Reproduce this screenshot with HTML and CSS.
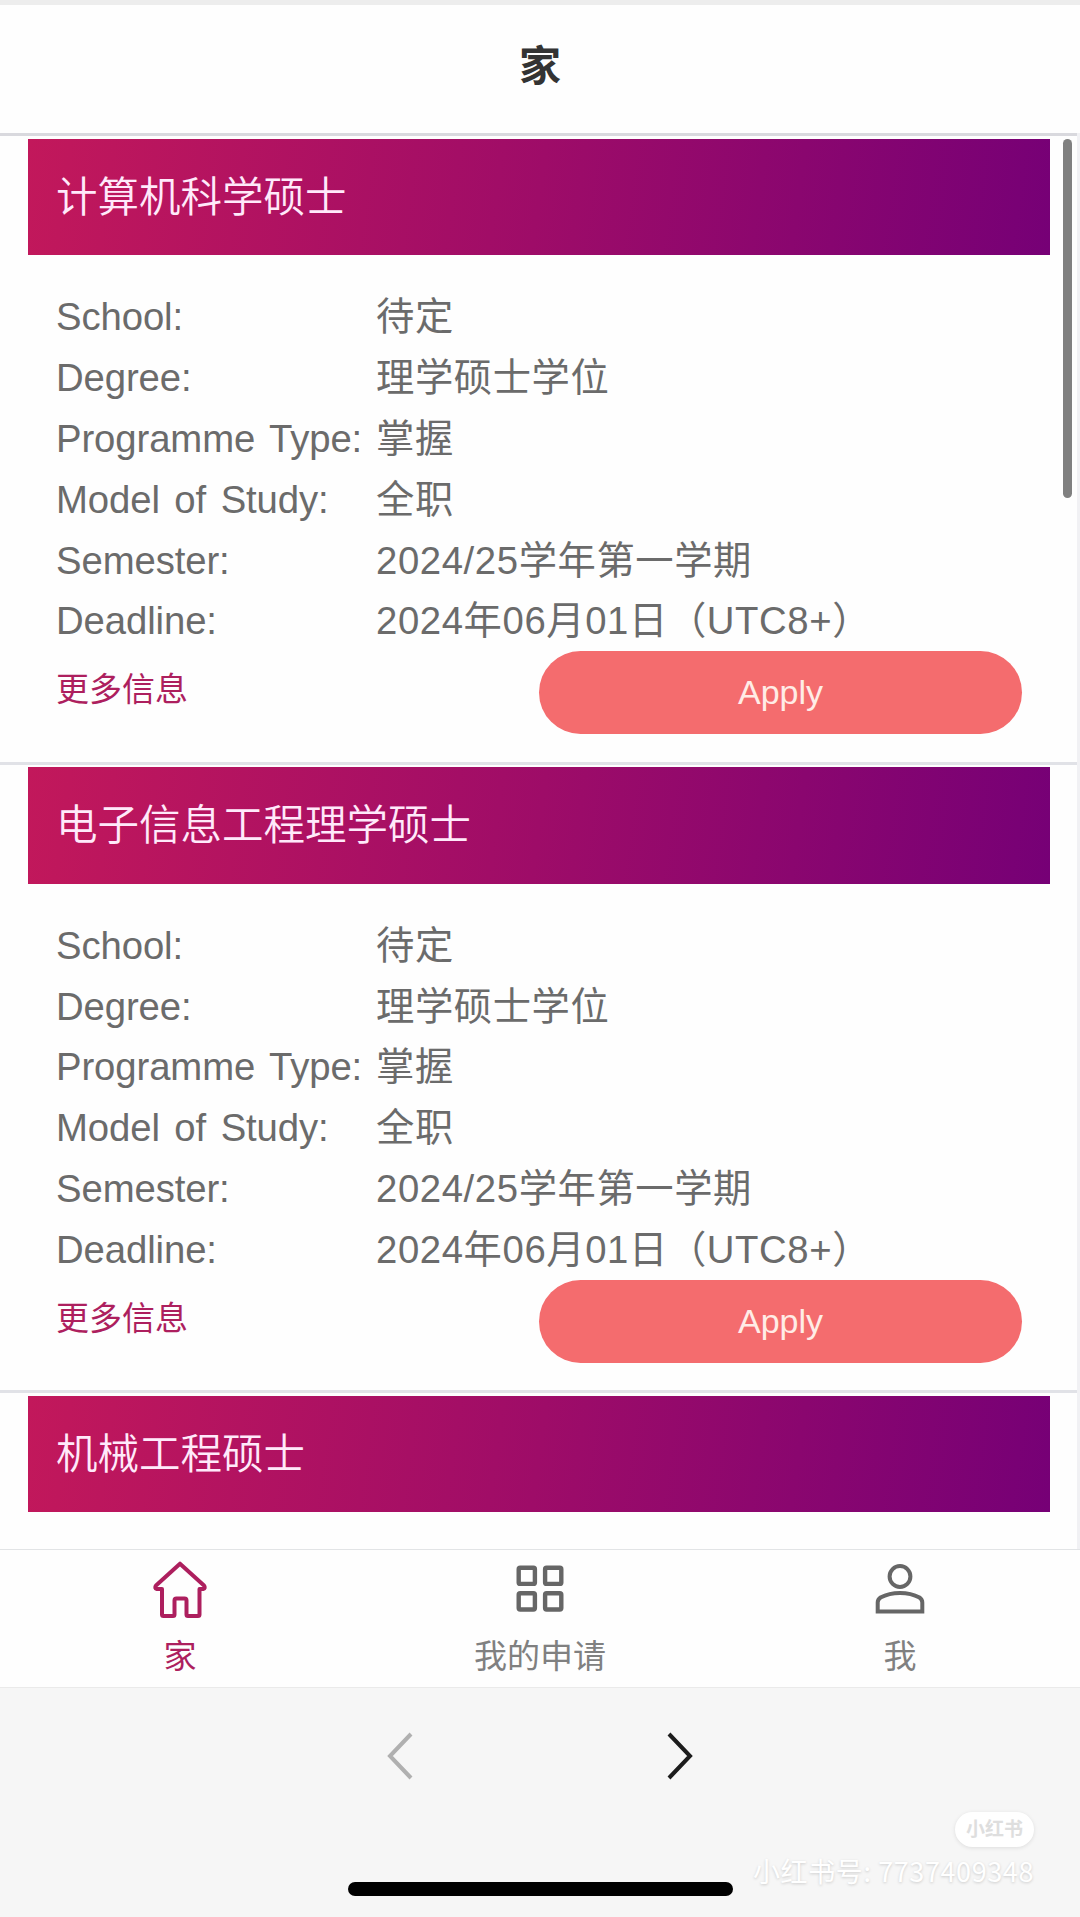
FILE: index.html
```html
<!DOCTYPE html>
<html lang="zh-CN">
<head>
  <meta charset="UTF-8">
  <title>家</title>
  <link rel="stylesheet" href="styles.css">
</head>
<body>

  <header class="header">
    <h1>家</h1>
  </header>

  <!-- Programme list -->
  <main class="list">
    <div class="scrollbar"></div>

    <section class="card">
      <h2>计算机科学硕士</h2>
      <dl class="details">
        <dt>School:</dt><dd>待定</dd>
        <dt>Degree:</dt><dd>理学硕士学位</dd>
        <dt>Programme Type:</dt><dd>掌握</dd>
        <dt>Model of Study:</dt><dd>全职</dd>
        <dt>Semester:</dt><dd>2024/25学年第一学期</dd>
        <dt>Deadline:</dt><dd>2024年06月01日（UTC8+）</dd>
      </dl>
      <div class="actions">
        <a class="more">更多信息</a>
        <button class="apply">Apply</button>
      </div>
    </section>

    <section class="card">
      <h2>电子信息工程理学硕士</h2>
      <dl class="details">
        <dt>School:</dt><dd>待定</dd>
        <dt>Degree:</dt><dd>理学硕士学位</dd>
        <dt>Programme Type:</dt><dd>掌握</dd>
        <dt>Model of Study:</dt><dd>全职</dd>
        <dt>Semester:</dt><dd>2024/25学年第一学期</dd>
        <dt>Deadline:</dt><dd>2024年06月01日（UTC8+）</dd>
      </dl>
      <div class="actions">
        <a class="more">更多信息</a>
        <button class="apply">Apply</button>
      </div>
    </section>

    <section class="card">
      <h2>机械工程硕士</h2>
    </section>
  </main>

  <!-- Tab bar -->
  <nav class="tabs">
    <a class="tab active">
      <svg width="60" height="60" viewBox="0 0 60 60" fill="none" stroke="currentColor" stroke-width="4" stroke-linejoin="round">
        <path d="M30 4.700 L54 26.500 Q56 29 53 30 H49.500 V55.500 Q49.500 57 48 57 H38 Q36.500 57 36.500 55.500 V41.500 Q36.500 39.500 34.500 39.500 H26.500 Q24.500 39.500 24.500 41.500 V55.500 Q24.500 57 23 57 H13.500 Q12 57 12 55.500 V30 H7 Q4 29 6 26.500 Z"/>
      </svg>
      <span>家</span>
    </a>
    <a class="tab">
      <svg width="60" height="60" viewBox="0 0 60 60" fill="none" stroke="currentColor" stroke-width="4.400">
        <rect x="8.700" y="8.700" width="16.200" height="16.200" rx="1.500"/>
        <rect x="35.100" y="8.700" width="16.200" height="16.200" rx="1.500"/>
        <rect x="8.700" y="34.300" width="16.200" height="16.200" rx="1.500"/>
        <rect x="35.100" y="34.300" width="16.200" height="16.200" rx="1.500"/>
      </svg>
      <span>我的申请</span>
    </a>
    <a class="tab">
      <svg width="60" height="60" viewBox="0 0 60 60" fill="none" stroke="currentColor" stroke-width="4">
        <circle cx="30" cy="17.500" r="10.400"/>
        <path d="M7.700 52.500 V43.500 Q7.700 40.500 10.500 38.500 Q19 34 30 34 Q41 34 49.500 38.500 Q52.300 40.500 52.300 43.500 V52.500 Z"/>
      </svg>
      <span>我</span>
    </a>
  </nav>

  <!-- Browser toolbar -->
  <footer class="toolbar">
    <div class="history">
      <svg class="back" width="30" height="50" viewBox="0 0 30 50" fill="none" stroke="currentColor" stroke-width="4">
        <path d="M26 3 L5 25 L26 47"/>
      </svg>
      <svg class="forward" width="30" height="50" viewBox="0 0 30 50" fill="none" stroke="currentColor" stroke-width="4">
        <path d="M4 3 L25 25 L4 47"/>
      </svg>
    </div>
    <div class="home-bar"></div>
    <div class="watermark">
      <span class="badge">小红书</span>
      <span class="account">小红书号: 7737409348</span>
    </div>
  </footer>

</body>
</html>
```
FILE: styles.css
```css
* {
  box-sizing: border-box;
}

body {
  margin: 0;
  height: 1917px;
  display: flex;
  flex-direction: column;
  overflow: hidden;
  background: #fefefe;
  color: #6b6b6b;
  font-family: "Liberation Sans", "Noto Sans CJK SC", sans-serif;
}

.header {
  height: 133px;
  border-top: 5px solid #ededed;
  display: flex;
  justify-content: center;
  flex-shrink: 0;
}

h1 {
  margin: 0;
  font-size: 42px;
  line-height: 123px;
  color: #333;
}

/* Programme list */
.list {
  position: relative;
  flex: 1;
  min-height: 0;
  overflow: hidden;
  border-right: 3px solid #f1f1f4;
}

.scrollbar {
  position: absolute;
  top: 6px;
  right: 5px;
  width: 9px;
  height: 359px;
  border-radius: 5px;
  background: #808080;
}

.card {
  height: 628.7px;
  padding: 2.500px 27px 0 28px;
  border-top: 3px solid #d9d9de;
}

.card + .card {
  border-top-color: #e1e2e7;
}

h2 {
  margin: 0;
  height: 116.500px;
  padding-left: 28px;
  background: linear-gradient(98deg, #c2185b, #9e0c68 50%, #760076);
  color: #ffe9fa;
  font-size: 41.5px;
  font-weight: 350;
  line-height: 118px;
}

.details {
  display: grid;
  grid-template-columns: 320px 1fr;
  grid-auto-rows: 60.9px;
  margin: 31px 0 0 28px;
  font-size: 38.3px;
  line-height: 61.5px;
}

dt, dd {
  margin: 0;
  white-space: nowrap;
}

dt {
  letter-spacing: -0.1px;
  word-spacing: 4px;
}

dd {
  letter-spacing: 0.6px;
}

.actions {
  display: flex;
  justify-content: space-between;
  padding: 0 28px;
}

.more {
  color: #ad1f5e;
  font-size: 33px;
  line-height: 78px;
}

.apply {
  width: 483px;
  height: 83px;
  border: none;
  border-radius: 42px;
  background: #f46c6e;
  color: #ffece6;
  font: inherit;
  font-size: 34px;
}

/* Tab bar */
.tabs {
  display: flex;
  height: 138px;
  border-top: 1px solid #e2e4e6;
  flex-shrink: 0;
}

.tab {
  flex: 1;
  display: flex;
  flex-direction: column;
  align-items: center;
  padding-top: 9px;
  color: #666;
}

.tab svg {
  flex-shrink: 0;
}

.tab span {
  font-size: 33px;
  line-height: 76px;
  color: #808080;
}

.tab.active, .tab.active span {
  color: #ad1f5e;
}

/* Browser toolbar */
.toolbar {
  position: relative;
  height: 230px;
  padding-top: 43px;
  border-top: 1px solid #eaeaea;
  background: #f6f6f6;
  flex-shrink: 0;
}

.history {
  display: flex;
  justify-content: center;
  gap: 250px;
}

.back {
  color: #b0b0b0;
}

.forward {
  color: #1c1c1c;
}

.home-bar {
  width: 385px;
  height: 14px;
  margin: 101px auto 0;
  border-radius: 7px;
  background: #000;
}

.watermark {
  position: absolute;
  right: 46px;
  bottom: 26px;
  display: flex;
  flex-direction: column;
  align-items: flex-end;
  color: #fff;
}

.badge {
  width: 79px;
  height: 35px;
  border-radius: 18px;
  background: #fff;
  box-shadow: 0 1px 4px rgba(0, 0, 0, 0.1);
  color: #dedede;
  font-size: 19px;
  font-weight: bold;
  line-height: 36px;
  text-align: center;
}

.account {
  margin-top: 4px;
  font-family: "Noto Sans CJK SC", sans-serif;
  font-size: 27px;
  line-height: 40px;
  letter-spacing: 0.6px;
  text-shadow: 0 1px 3px rgba(0, 0, 0, 0.18);
}
```
